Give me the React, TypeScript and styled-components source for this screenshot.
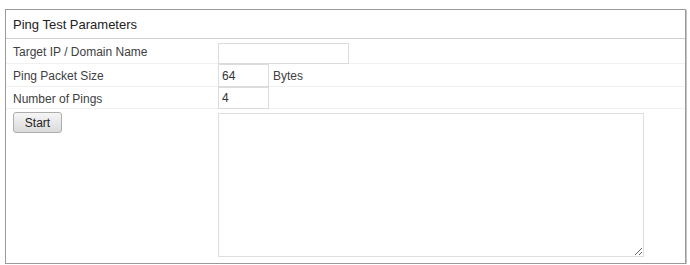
import React from 'react';
import styled, { createGlobalStyle } from 'styled-components';

const GlobalStyle = createGlobalStyle`
  html, body { margin: 0; padding: 0; background: #fff; }
  body { font-family: "Liberation Sans", Arial, sans-serif; color: #333; }
`;

const Page = styled.div`
  padding: 9px 4px 0 5px;
`;

const Panel = styled.div`
  width: 679px;
  height: 253px;
  border: 1px solid #9a9a9a;
  box-shadow: 1px 1px 0 #c4c4c4;
  display: flex;
  flex-direction: column;
  box-sizing: content-box;
`;

const PanelHeader = styled.div`
  flex-shrink: 0;
  height: 28px;
  border-bottom: 1px solid #cfcfcf;
  display: flex;
  align-items: center;
  padding-left: 7px;
  font-size: 13px;
  color: #222;
`;

const Row = styled.div<{ $h: number }>`
  flex-shrink: 0;
  display: grid;
  grid-template-columns: 212px 1fr;
  height: ${p => p.$h}px;
  border-bottom: 1px solid #f0f0f0;
  box-sizing: border-box;
`;

const Label = styled.div`
  font-size: 12px;
  color: #404040;
  padding-left: 7px;
  padding-top: 1px;
  display: flex;
  align-items: center;
`;

const Value = styled.div<{ $top?: number }>`
  display: flex;
  align-items: ${p => (p.$top !== undefined ? 'flex-start' : 'stretch')};
  padding-top: ${p => p.$top ?? 0}px;
`;

const TextBox = styled.input<{ $w: number; $h: number }>`
  width: ${p => p.$w}px;
  height: ${p => p.$h}px;
  box-sizing: border-box;
  border: 1px solid #dcdcdc;
  padding: 0 0 0 3px;
  font-family: "Liberation Sans", Arial, sans-serif;
  font-size: 12px;
  color: #333;
  outline: none;
  margin: 0;
`;

const Unit = styled.span`
  font-size: 12px;
  color: #404040;
  display: flex;
  align-items: center;
  padding-left: 4px;
`;

const LastRow = styled.div`
  display: grid;
  grid-template-columns: 212px 1fr;
  flex: 1;
  min-height: 0;
  padding-top: 3px;
`;

const ButtonCell = styled.div`
  padding-left: 7px;
`;

const StartButton = styled.button`
  display: block;
  width: 49px;
  height: 21px;
  font-family: "Liberation Sans", Arial, sans-serif;
  font-size: 12px;
  color: #222;
  border: 1px solid #adadad;
  border-radius: 3px;
  background: linear-gradient(#f6f6f6, #dadada);
  padding: 0;
  margin: 0;
`;

const Output = styled.textarea`
  display: block;
  width: 426px;
  height: 144px;
  box-sizing: border-box;
  border: 1px solid #dedede;
  margin: 1px 0 0;
  resize: both;
  outline: none;
  font-family: "Liberation Mono", monospace;
  font-size: 12px;
`;

export default function App() {
  return (
    <>
      <GlobalStyle />
      <Page>
        <Panel>
          <PanelHeader>Ping Test Parameters</PanelHeader>
          <Row $h={25}>
            <Label>Target IP / Domain Name</Label>
            <Value $top={4}>
              <TextBox $w={131} $h={21} defaultValue="" />
            </Value>
          </Row>
          <Row $h={23}>
            <Label>Ping Packet Size</Label>
            <Value>
              <TextBox $w={51} $h={23} defaultValue="64" />
              <Unit>Bytes</Unit>
            </Value>
          </Row>
          <Row $h={22}>
            <Label>Number of Pings</Label>
            <Value>
              <TextBox $w={51} $h={22} defaultValue="4" />
            </Value>
          </Row>
          <LastRow>
            <ButtonCell>
              <StartButton>Start</StartButton>
            </ButtonCell>
            <div>
              <Output />
            </div>
          </LastRow>
        </Panel>
      </Page>
    </>
  );
}
